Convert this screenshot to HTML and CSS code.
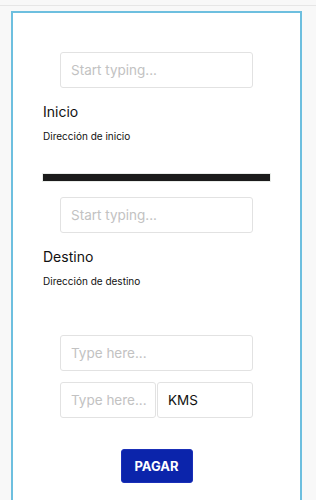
FILE: index.html
```html
<!DOCTYPE html>
<html lang="es">

<head>
    <meta charset="UTF-8" />
    <meta name="viewport" content="width=device-width, initial-scale=1.0">
    <title>Viaje</title>
    <link rel="stylesheet" href="styles.css">
</head>

<body>
    <div class="topbar"></div>
    <div class="frame">
        <div class="content">
            <input class="field" type="text" placeholder="Start typing..." />
            <h3 class="label">Inicio</h3>
            <p class="hint">Dirección de inicio</p>

            <div class="divider"></div>

            <input class="field field-gap" type="text" placeholder="Start typing..." />
            <h3 class="label">Destino</h3>
            <p class="hint">Dirección de destino</p>

            <input class="field field-far" type="text" placeholder="Type here..." />
            <div class="pair">
                <input class="field half" type="text" placeholder="Type here..." />
                <input class="field half" type="text" value="KMS" />
            </div>

            <button class="pay">PAGAR</button>
        </div>
    </div>
</body>

</html>
```

FILE: styles.css
```css
body {
    margin: 0;
    background: #f8f8f8;
    font-family: 'Inter', 'Noto Sans', sans-serif;
    color: #111;
    overflow: hidden;
}

.topbar {
    height: 5px;
    border-bottom: 1px solid #e6e6e6;
}

.frame {
    margin: 5px 14px 0 11px;
    background: #fff;
    border: 2px solid #6dbfdf;
    border-bottom: none;
    height: 489px;
}

.content {
    width: 227px;
    margin: 0 auto;
    padding-top: 39px;
    display: flex;
    flex-direction: column;
}

.field {
    box-sizing: border-box;
    width: 193px;
    height: 36px;
    align-self: center;
    padding: 0 4px 0 10px;
    border: 1px solid #e2e2e2;
    border-radius: 3px;
    background: #fff;
    font-family: inherit;
    font-size: 13.5px;
    color: #111;
    outline: none;
}

.field::placeholder {
    color: #c2c2c2;
}

.field-gap {
    margin-top: 16px;
}

.field-far {
    margin-top: 48px;
}

.label {
    margin: 15px 0 0 0;
    font-size: 14px;
    font-weight: 400;
    line-height: 18px;
}

.hint {
    margin: 9px 0 0 0;
    font-size: 10px;
    line-height: 12px;
}

.divider {
    margin-top: 32px;
    height: 7px;
    background: #1b1b1b;
    box-shadow: 0 0 0 1px #e9ece9;
}

.pair {
    margin-top: 11px;
    align-self: center;
    display: flex;
    gap: 1px;
    width: 193px;
}

.half {
    width: 96px;
}

.pay {
    margin-top: 31px;
    align-self: center;
    width: 72px;
    height: 34px;
    background: #0b24ab;
    color: #fff;
    border: 1px solid #1a2fb8;
    border-radius: 3px;
    font-family: inherit;
    font-size: 13px;
    font-weight: 700;
    cursor: pointer;
}
```
